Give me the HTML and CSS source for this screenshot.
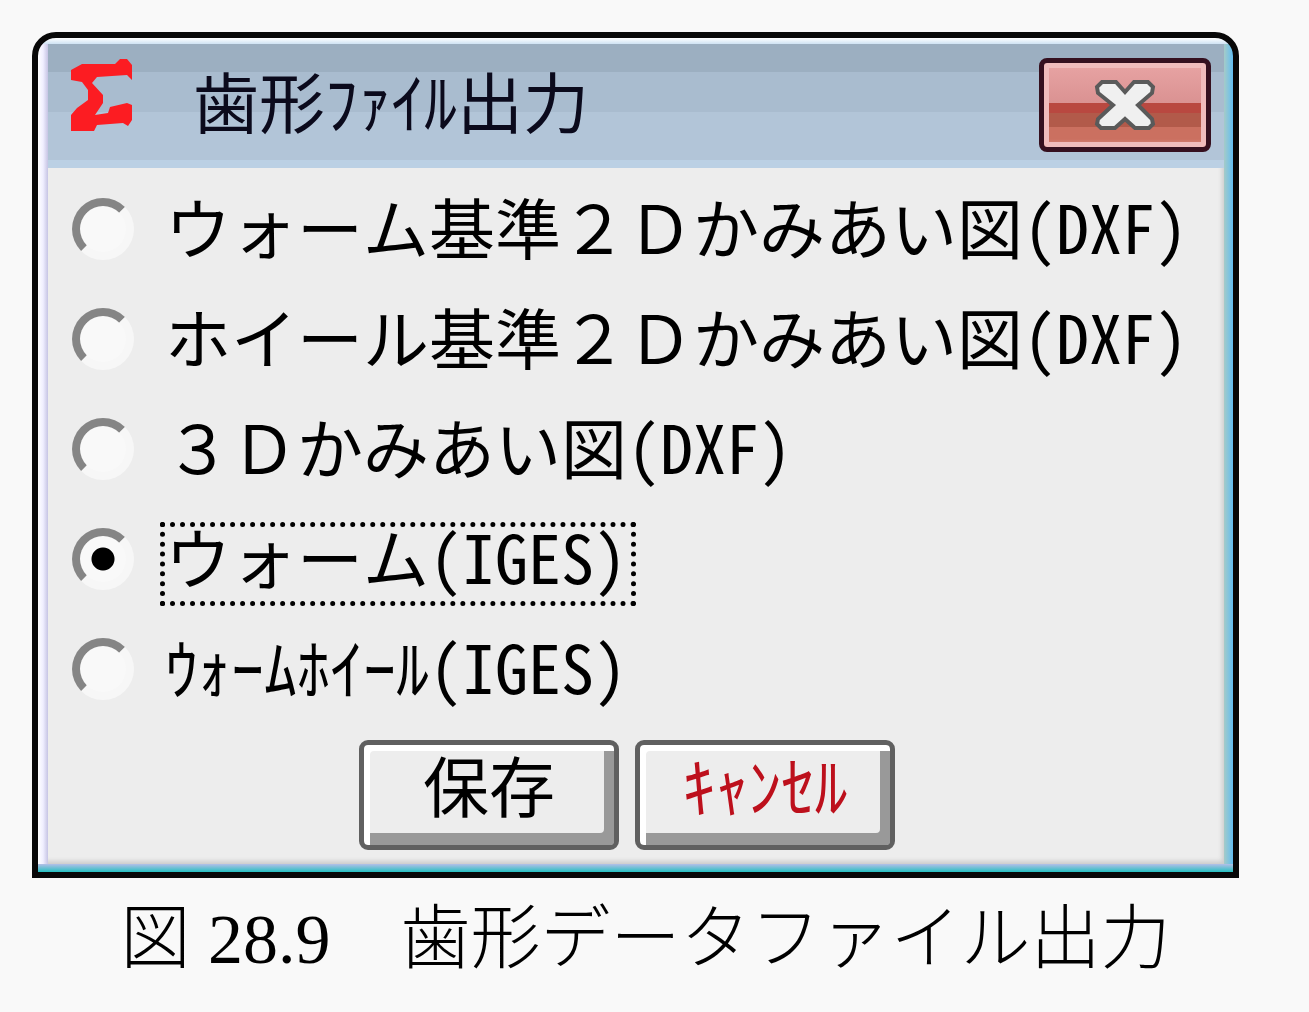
FILE: index.html
```html
<!DOCTYPE html>
<html lang="ja">
<head>
<meta charset="utf-8">
<title>歯形ファイル出力</title>
<link rel="stylesheet" href="styles.css">
</head>
<body>
<figure class="figure">
  <form class="window">
    <header class="titlebar">
      <svg class="logo" viewBox="0 0 64 74" aria-hidden="true">
        <path d="M1 12 L12 6 H45 L50 1 H57 L62 7 V22 L57 17 L27 19 L22 25 L33 37 V45 L25 57 L38 55 L40 49 L57 45 L62 47 V62 L58 68 L53 65 L27 67 L24 73 H1 V57 L7 50 L18 42 V32 L12 24 L1 22 Z"/>
      </svg>
      <h1 class="title">歯形ﾌｧｲﾙ出力</h1>
      <button class="close" type="button" aria-label="閉じる">
        <svg class="close-icon" viewBox="0 0 62 50" aria-hidden="true">
          <path d="M3 7 L8 2 H22 L31 12 L40 2 H54 L59 7 L58 13 L44 25 L58 39 L59 44 L55 48 H41 L31 39 L21 48 H7 L3 44 L4 39 L19 25 L4 13 Z"/>
        </svg>
      </button>
    </header>
    <div class="content">
      <label class="option"><input class="radio" type="radio" name="output"><span class="option-text">ウォーム基準２Ｄかみあい図(DXF)</span></label>
      <label class="option"><input class="radio" type="radio" name="output"><span class="option-text">ホイール基準２Ｄかみあい図(DXF)</span></label>
      <label class="option"><input class="radio" type="radio" name="output"><span class="option-text">３Ｄかみあい図(DXF)</span></label>
      <label class="option"><input class="radio" type="radio" name="output" checked><span class="option-text">ウォーム(IGES)</span></label>
      <label class="option"><input class="radio" type="radio" name="output"><span class="option-text">ｳｫｰﾑﾎｲｰﾙ(IGES)</span></label>
      <div class="actions">
        <button class="button" type="button">保存</button>
        <button class="button cancel" type="button">ｷｬﾝｾﾙ</button>
      </div>
    </div>
  </form>
  <figcaption class="caption">図 28.9　歯形データファイル出力</figcaption>
</figure>
</body>
</html>
```
FILE: styles.css
```css
* {
  box-sizing: border-box;
}

body {
  margin: 0;
  background: #f9f9f9;
  color: #000;
}

.figure {
  margin: 0;
  padding: 32px 70px 0 32px;
}

.window {
  padding: 6px 9px 8px 10px;
  border: 6px solid #080808;
  border-radius: 24px 24px 0 0;
  background:
    linear-gradient(#b4bfe8, #24c0c0) bottom / 100% 8px no-repeat,
    linear-gradient(#fff, #cfe3f4) top / 100% 6px no-repeat,
    linear-gradient(to right, #fff, #f0efff 50%, #c6c4e4) left / 10px 100% no-repeat,
    linear-gradient(to right, #a5cbc8, #62bdf2) right / 9px 100% no-repeat;
  font-family: "Noto Sans Mono CJK JP", "Noto Sans CJK JP", sans-serif;
  font-size: 66px;
  line-height: 74px;
  white-space: nowrap;
}

.titlebar {
  display: flex;
  align-items: flex-start;
  height: 124px;
  padding: 14px 13px 0 22px;
  background: linear-gradient(#9cafc1 28px, #a9bccf 28px 68px, #b2c5d8 68px 116px, #bbd0e4 116px);
}

.logo {
  width: 64px;
  height: 74px;
  fill: #fc1c22;
}

.title {
  flex: 1;
  margin: 4px 0 0 59px;
  color: #0b0a1c;
  font-size: 66px;
  font-weight: 400;
}

.close {
  display: grid;
  place-items: center;
  width: 172px;
  height: 94px;
  padding: 0;
  border: 5px solid #35101f;
  border-radius: 8px;
  background: linear-gradient(#e8a4a4, #da9292 40px, #b94840 40px 50px, #b25a4a 50px 64px, #cb7060 64px 76px, #d98880);
  box-shadow: inset 0 0 0 5px #f0bcbc;
}

.close-icon {
  width: 62px;
  height: 50px;
  fill: #f0f0f0;
  stroke: #5a5a5a;
  stroke-width: 4px;
}

.content {
  display: flex;
  flex-direction: column;
  align-items: flex-start;
  gap: 26px;
  padding: 24px 0 14px 24px;
  background: #ededed;
  box-shadow: inset -3px -4px 4px -1px #ccc;
}

.option {
  display: flex;
  align-items: flex-start;
  gap: 28px;
}

.radio {
  appearance: none;
  width: 62px;
  height: 62px;
  margin: 6px 0 0;
  border: 8px solid;
  border-color: #858585 #f7f7f7 #f7f7f7 #858585;
  border-radius: 50%;
  background: #f9f9f9;
}

.radio:checked {
  background: radial-gradient(circle, #000 11px, #f9f9f9 12px);
}

.option-text {
  height: 84px;
  margin-left: -2px;
  padding-right: 4px;
  line-height: 56px;
  border: 5px dotted transparent;
}

.radio:checked + .option-text {
  border-color: #000;
}

.actions {
  display: flex;
  align-self: stretch;
  justify-content: center;
  gap: 16px;
  margin-top: -2px;
  padding-right: 42px;
}

.button {
  width: 260px;
  height: 110px;
  padding: 0 0 24px;
  border: 5px solid #606060;
  border-radius: 9px;
  background: #ededed;
  box-shadow: inset 6px 6px 0 #fff, inset -10px -12px 0 #999;
  color: #000;
  font: inherit;
}

.cancel {
  color: #bd101c;
}

.caption {
  padding-left: 20px;
  font-family: "Liberation Serif", "Noto Sans CJK JP", serif;
  font-size: 70px;
  font-weight: 300;
  line-height: 124px;
  text-align: center;
  white-space: nowrap;
}
```
